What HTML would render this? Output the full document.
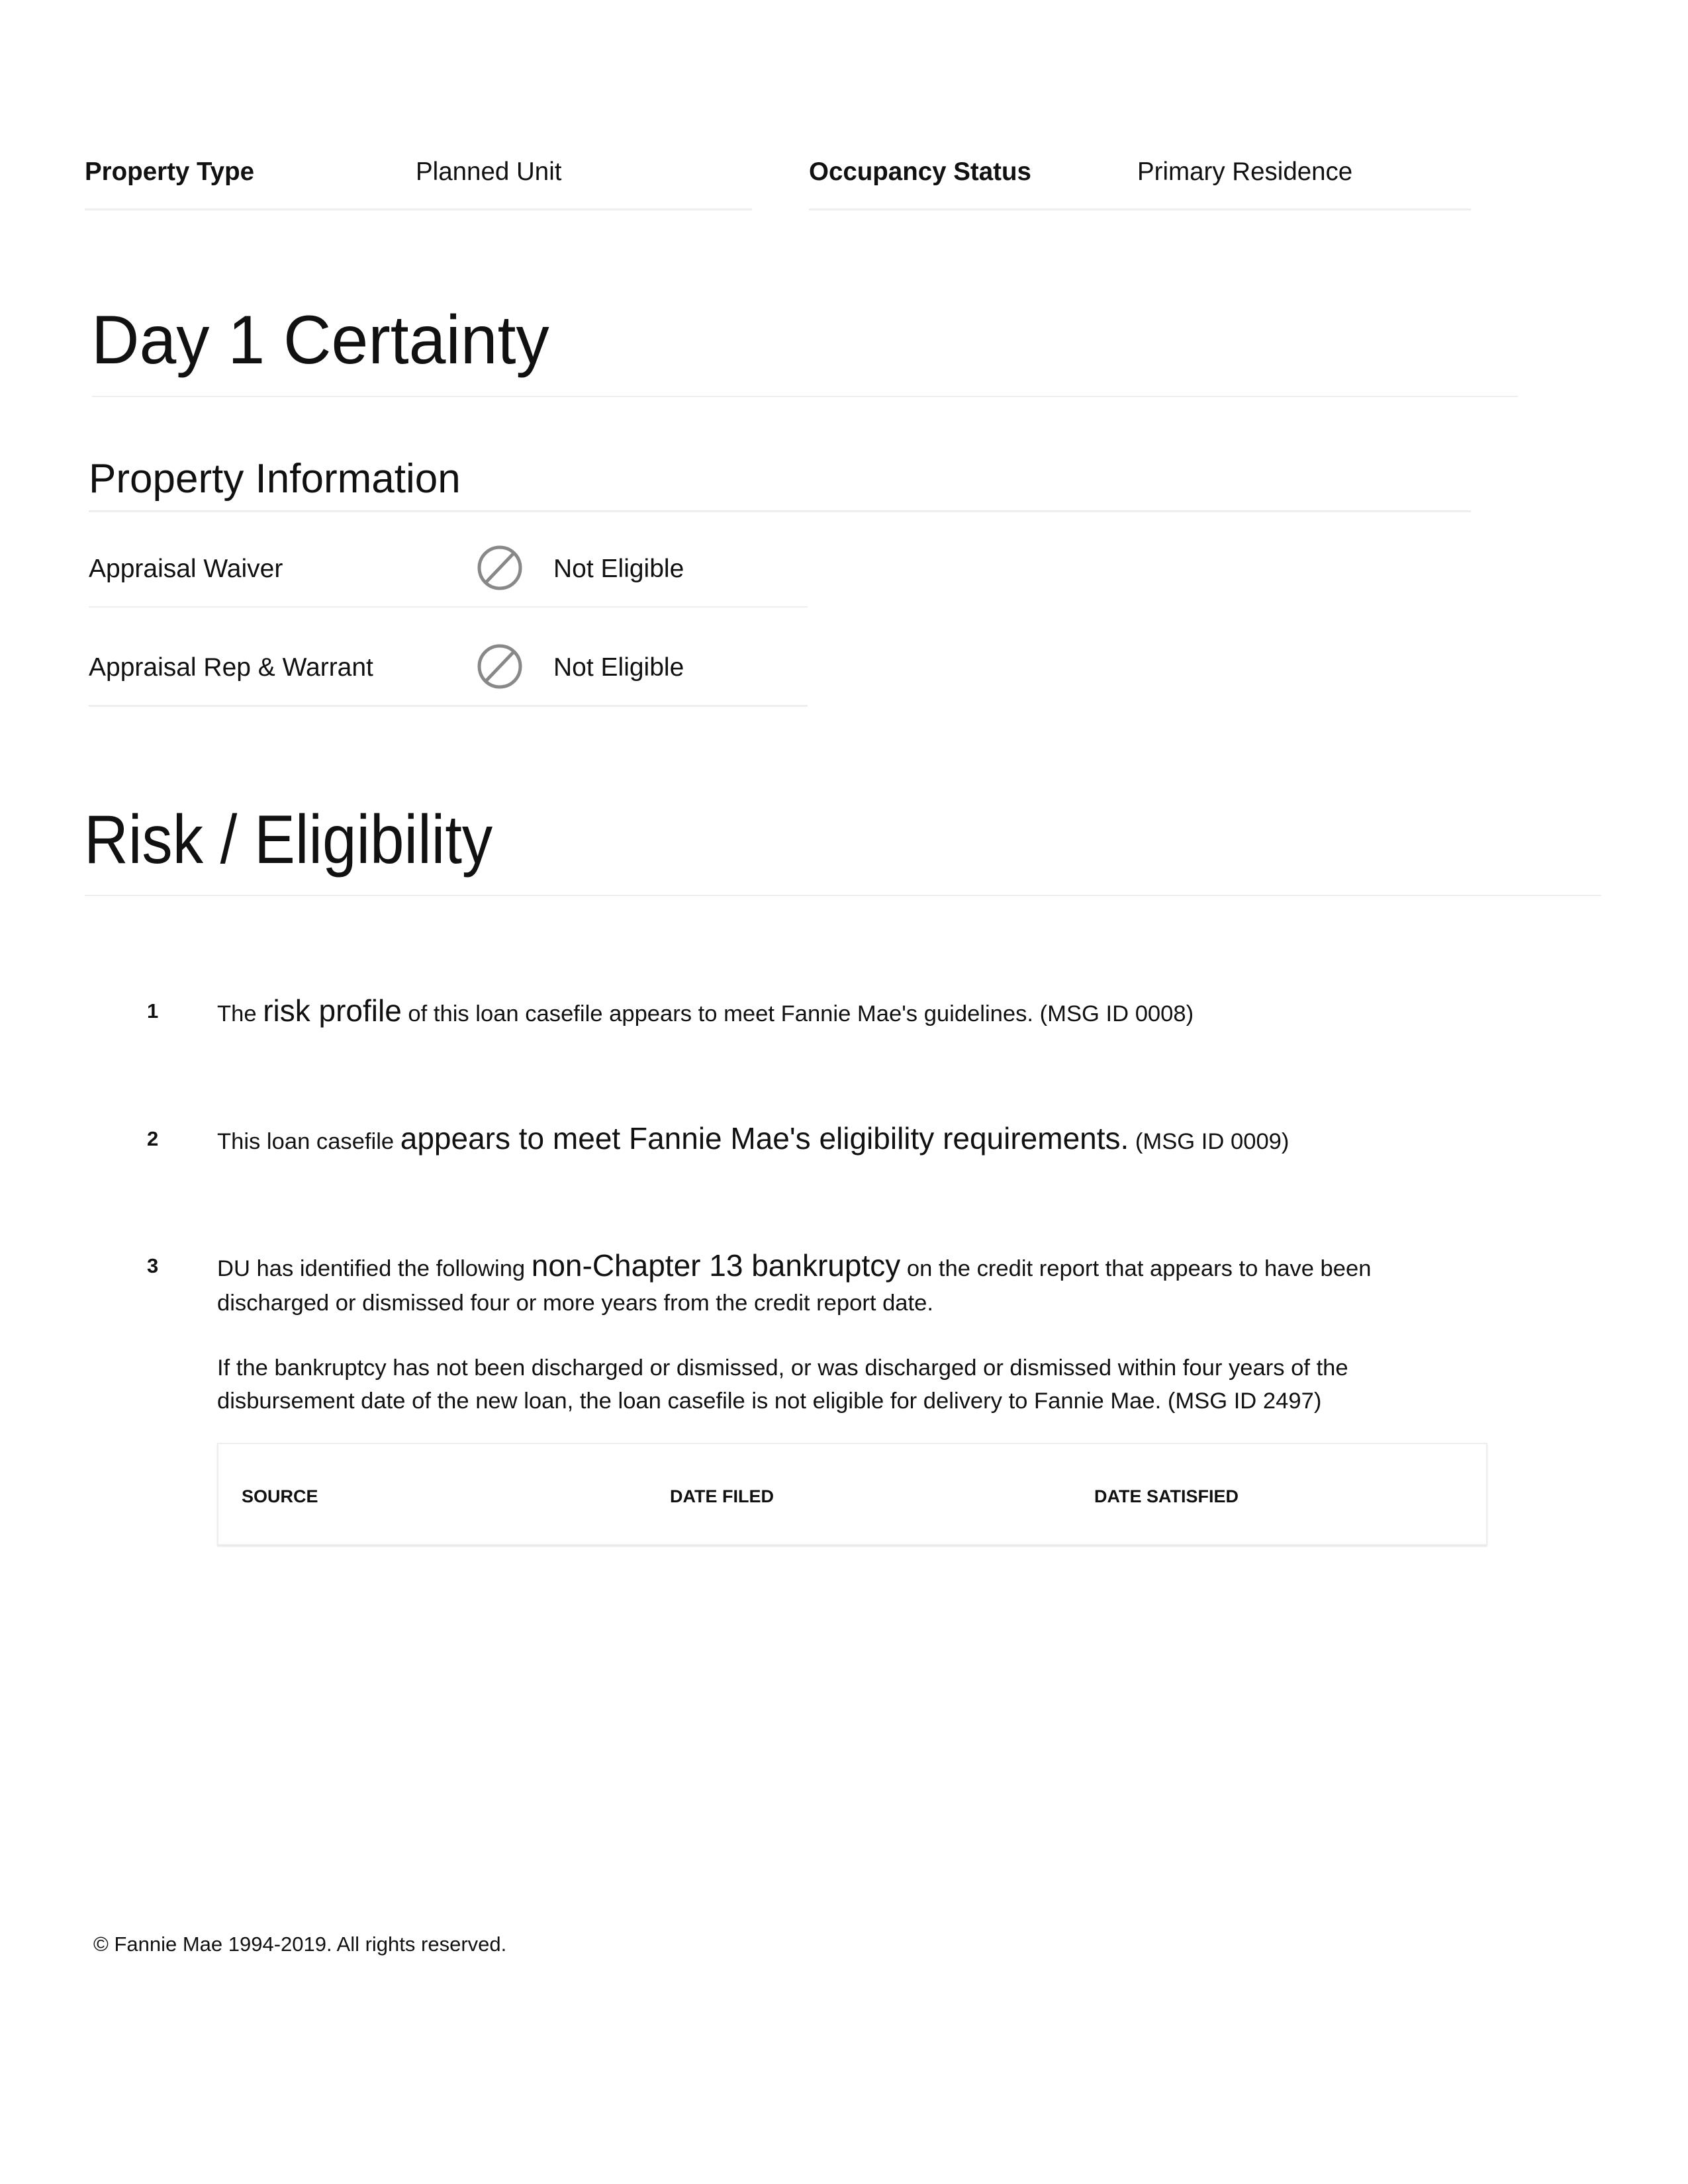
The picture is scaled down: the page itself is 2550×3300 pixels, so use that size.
<!DOCTYPE html>
<html><head><meta charset="utf-8"><style>
html,body{margin:0;padding:0;background:#fff}
body{width:2550px;height:3300px;position:relative;font-family:"Liberation Sans",Arial,sans-serif;color:#111;overflow:hidden}
.a{position:absolute;white-space:nowrap;line-height:1}
.ln{position:absolute;height:3px;background:#eeeeee}
.s{font-size:34.6px}.b{font-size:46px}
</style></head><body>
<div class="a" style="left:128px;top:241px;font-size:38.5px;font-weight:bold">Property Type</div>
<div class="a" style="left:628px;top:241px;font-size:38.5px">Planned Unit</div>
<div class="a" style="left:1222px;top:241px;font-size:38.5px;font-weight:bold">Occupancy Status</div>
<div class="a" style="left:1718px;top:241px;font-size:38.5px">Primary Residence</div>
<div class="ln" style="left:128px;top:315px;width:1008px"></div>
<div class="ln" style="left:1222px;top:315px;width:1000px"></div>

<div class="a" style="left:138px;top:462px;font-size:104px;transform:scaleX(0.965);transform-origin:0 0">Day 1 Certainty</div>
<div class="ln" style="left:139px;top:598px;width:2154px;height:2px"></div>

<div class="a" style="left:134px;top:693px;font-size:62px">Property Information</div>
<div class="ln" style="left:134px;top:771px;width:2088px"></div>

<div class="a" style="left:134px;top:840px;font-size:39px">Appraisal Waiver</div>
<svg class="a" style="left:720px;top:823px" width="70" height="70" viewBox="0 0 70 70"><circle cx="35" cy="35" r="31" fill="none" stroke="#888" stroke-width="5"/><line x1="14" y1="57" x2="56" y2="13" stroke="#888" stroke-width="5"/></svg>
<div class="a" style="left:836px;top:840px;font-size:39px">Not Eligible</div>
<div class="ln" style="left:134px;top:916px;width:1086px;height:2px"></div>

<div class="a" style="left:134px;top:989px;font-size:39px">Appraisal Rep &amp; Warrant</div>
<svg class="a" style="left:720px;top:972px" width="70" height="70" viewBox="0 0 70 70"><circle cx="35" cy="35" r="31" fill="none" stroke="#888" stroke-width="5"/><line x1="14" y1="57" x2="56" y2="13" stroke="#888" stroke-width="5"/></svg>
<div class="a" style="left:836px;top:989px;font-size:39px">Not Eligible</div>
<div class="ln" style="left:134px;top:1065px;width:1086px"></div>

<div class="a" style="left:127px;top:1217px;font-size:104px;transform:scaleX(0.89);transform-origin:0 0">Risk / Eligibility</div>
<div class="ln" style="left:128px;top:1352px;width:2291px;height:2px"></div>

<div class="a" style="left:222px;top:1512px;font-size:31px;font-weight:bold">1</div>
<div class="a" style="left:328px;top:1504px"><span class="s">The </span><span class="b">risk profile</span><span class="s"> of this loan casefile appears to meet Fannie Mae's guidelines. (MSG ID 0008)</span></div>

<div class="a" style="left:222px;top:1705px;font-size:31px;font-weight:bold">2</div>
<div class="a" style="left:328px;top:1697px"><span class="s">This loan casefile </span><span class="b">appears to meet Fannie Mae's eligibility requirements.</span><span class="s"> (MSG ID 0009)</span></div>

<div class="a" style="left:222px;top:1897px;font-size:31px;font-weight:bold">3</div>
<div class="a" style="left:328px;top:1889px"><span class="s">DU has identified the following </span><span class="b">non-Chapter 13 bankruptcy</span><span class="s"> on the credit report that appears to have been</span></div>
<div class="a s" style="left:328px;top:1952px">discharged or dismissed four or more years from the credit report date.</div>
<div class="a s" style="left:328px;top:2050px">If the bankruptcy has not been discharged or dismissed, or was discharged or dismissed within four years of the</div>
<div class="a s" style="left:328px;top:2100px">disbursement date of the new loan, the loan casefile is not eligible for delivery to Fannie Mae. (MSG ID 2497)</div>

<div style="position:absolute;left:328px;top:2180px;width:1915px;height:151px;border:2px solid #eee;box-shadow:0 2px 2px #e6e6e6"></div>
<div class="a" style="left:365px;top:2248px;font-size:27px;font-weight:bold">SOURCE</div>
<div class="a" style="left:1012px;top:2248px;font-size:27px;font-weight:bold">DATE FILED</div>
<div class="a" style="left:1653px;top:2248px;font-size:27px;font-weight:bold">DATE SATISFIED</div>

<div class="a" style="left:141px;top:2922px;font-size:31px">© Fannie Mae 1994-2019. All rights reserved.</div>
</body></html>
